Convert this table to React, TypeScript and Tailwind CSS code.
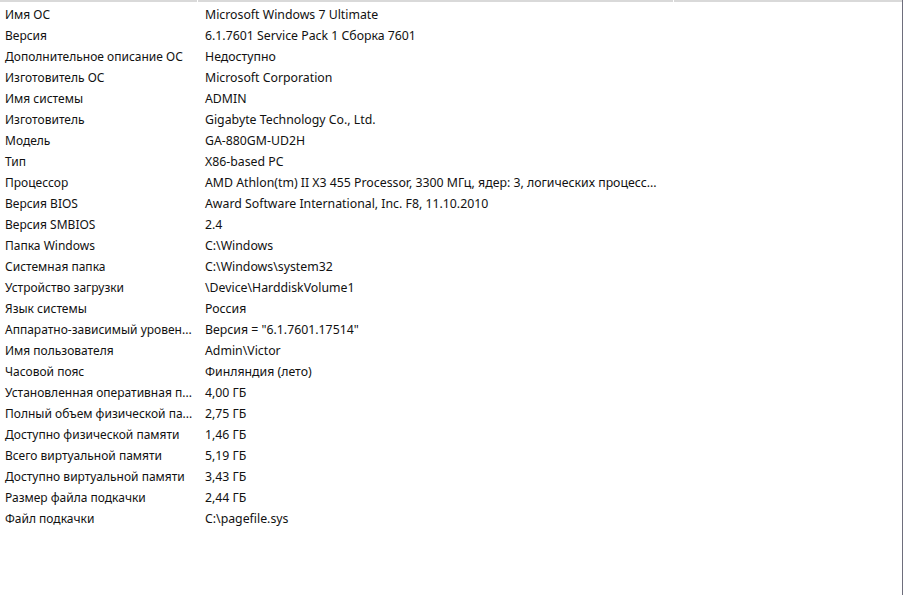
import React from 'react';

const rows: [string, string][] = [
  ['Имя ОС', 'Microsoft Windows 7 Ultimate'],
  ['Версия', '6.1.7601 Service Pack 1 Сборка 7601'],
  ['Дополнительное описание ОС', 'Недоступно'],
  ['Изготовитель ОС', 'Microsoft Corporation'],
  ['Имя системы', 'ADMIN'],
  ['Изготовитель', 'Gigabyte Technology Co., Ltd.'],
  ['Модель', 'GA-880GM-UD2H'],
  ['Тип', 'X86-based PC'],
  ['Процессор', 'AMD Athlon(tm) II X3 455 Processor, 3300 МГц, ядер: 3, логических процесс...'],
  ['Версия BIOS', 'Award Software International, Inc. F8, 11.10.2010'],
  ['Версия SMBIOS', '2.4'],
  ['Папка Windows', 'C:\\Windows'],
  ['Системная папка', 'C:\\Windows\\system32'],
  ['Устройство загрузки', '\\Device\\HarddiskVolume1'],
  ['Язык системы', 'Россия'],
  ['Аппаратно-зависимый уровен...', 'Версия = "6.1.7601.17514"'],
  ['Имя пользователя', 'Admin\\Victor'],
  ['Часовой пояс', 'Финляндия (лето)'],
  ['Установленная оперативная п...', '4,00 ГБ'],
  ['Полный объем физической па...', '2,75 ГБ'],
  ['Доступно физической памяти', '1,46 ГБ'],
  ['Всего виртуальной памяти', '5,19 ГБ'],
  ['Доступно виртуальной памяти', '3,43 ГБ'],
  ['Размер файла подкачки', '2,44 ГБ'],
  ['Файл подкачки', 'C:\\pagefile.sys'],
];

export default function App() {
  return (
    <div className="w-[904px] h-[595px] bg-white flex overflow-hidden" style={{ fontFamily: '"Noto Sans", "Open Sans", sans-serif' }}>
      <div className="flex-1 flex flex-col">
        {/* header remnant */}
        <div className="h-[2px] bg-[#d9d9d9] flex">
          <div className="w-[197px]" />
          <div className="w-px bg-white" />
          <div className="w-[475px]" />
          <div className="w-px bg-white" />
        </div>
        <div className="pt-[2px] flex flex-col">
          {rows.map(([k, v]) => (
            <div key={k} className="h-[21px] flex text-[#111] leading-[21px] whitespace-nowrap">
              <div className="w-[200px] pl-[5px] text-[12px]">{k}</div>
              <div className="pl-[5px] text-[12.3px]">{v}</div>
            </div>
          ))}
        </div>
      </div>
      <div className="w-px bg-[#6e6e7c]" />
      <div className="w-px bg-white" />
    </div>
  );
}
